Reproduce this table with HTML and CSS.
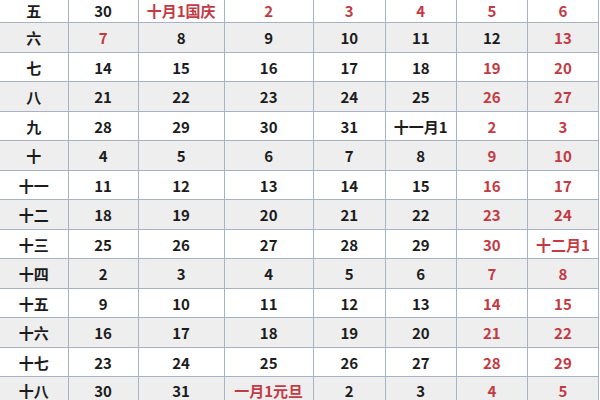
FILE: index.html
```html
<!DOCTYPE html>
<html lang="zh">
<head>
<meta charset="utf-8">
<title>日历</title>
<link rel="stylesheet" href="styles.css">
</head>
<body>
<table class="cal">
<colgroup>
<col class="c0"><col class="c1"><col class="c2"><col class="c3"><col class="c4"><col class="c5"><col class="c6"><col class="c7">
</colgroup>
<tbody>
<tr><td>五</td><td>30</td><td class="r">十月1国庆</td><td class="r">2</td><td class="r">3</td><td class="r">4</td><td class="r">5</td><td class="r">6</td></tr>
<tr><td>六</td><td class="r">7</td><td>8</td><td>9</td><td>10</td><td>11</td><td>12</td><td class="r">13</td></tr>
<tr><td>七</td><td>14</td><td>15</td><td>16</td><td>17</td><td>18</td><td class="r">19</td><td class="r">20</td></tr>
<tr><td>八</td><td>21</td><td>22</td><td>23</td><td>24</td><td>25</td><td class="r">26</td><td class="r">27</td></tr>
<tr><td>九</td><td>28</td><td>29</td><td>30</td><td>31</td><td>十一月1</td><td class="r">2</td><td class="r">3</td></tr>
<tr><td>十</td><td>4</td><td>5</td><td>6</td><td>7</td><td>8</td><td class="r">9</td><td class="r">10</td></tr>
<tr><td>十一</td><td>11</td><td>12</td><td>13</td><td>14</td><td>15</td><td class="r">16</td><td class="r">17</td></tr>
<tr><td>十二</td><td>18</td><td>19</td><td>20</td><td>21</td><td>22</td><td class="r">23</td><td class="r">24</td></tr>
<tr><td>十三</td><td>25</td><td>26</td><td>27</td><td>28</td><td>29</td><td class="r">30</td><td class="r">十二月1</td></tr>
<tr><td>十四</td><td>2</td><td>3</td><td>4</td><td>5</td><td>6</td><td class="r">7</td><td class="r">8</td></tr>
<tr><td>十五</td><td>9</td><td>10</td><td>11</td><td>12</td><td>13</td><td class="r">14</td><td class="r">15</td></tr>
<tr><td>十六</td><td>16</td><td>17</td><td>18</td><td>19</td><td>20</td><td class="r">21</td><td class="r">22</td></tr>
<tr><td>十七</td><td>23</td><td>24</td><td>25</td><td>26</td><td>27</td><td class="r">28</td><td class="r">29</td></tr>
<tr><td>十八</td><td>30</td><td>31</td><td class="r">一月1元旦</td><td>2</td><td>3</td><td class="r">4</td><td class="r">5</td></tr>
</tbody>
</table>
</body>
</html>
```
FILE: styles.css
```css
html, body {
  margin: 0;
  padding: 0;
  background: #ffffff;
  overflow: hidden;
}
.cal {
  border-collapse: collapse;
  table-layout: fixed;
  width: 599px;
  font-family: "Noto Sans CJK SC", "Liberation Sans", sans-serif;
  font-size: 15px;
  font-weight: 700;
  color: #1c1c1c;
}
.c0 { width: 68px; }
.c1 { width: 70px; }
.c2 { width: 86px; }
.c3 { width: 89px; }
.c4 { width: 72px; }
.c5 { width: 71px; }
.c6 { width: 71px; }
.c7 { width: 71px; }
.cal tr {
  height: 29.5px;
}
.cal tr:first-child {
  height: 22.5px;
}
.cal tr:nth-child(even) {
  background: #eeeeee;
}
.cal td {
  border: 1px solid #a7b3c4;
  text-align: center;
  vertical-align: middle;
  padding: 2px 0 0 0;
  line-height: 16px;
  white-space: nowrap;
}
.cal tr:first-child td,
.cal tr:last-child td {
  padding: 0;
}
.cal tr:first-child td {
  border-top: none;
}
.cal td:first-child {
  border-left: none;
}
.cal td.r {
  color: #c23a44;
}
```
